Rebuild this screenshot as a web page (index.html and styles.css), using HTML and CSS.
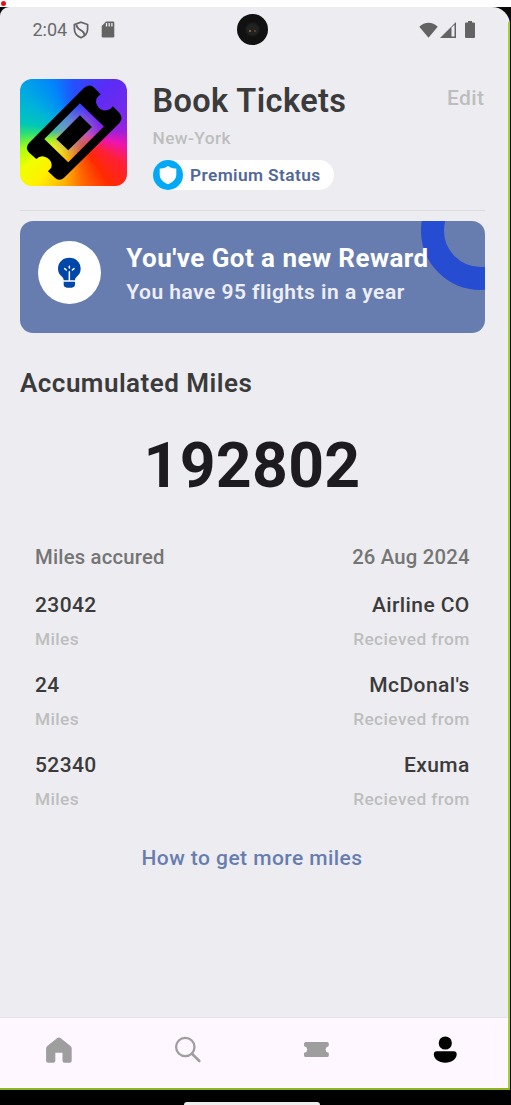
FILE: index.html
```html
<!DOCTYPE html>
<html lang="en">
<head>
<meta charset="utf-8">
<title>Book Tickets</title>
<link rel="stylesheet" href="styles.css">
</head>
<body>
<div class="device">
  <span class="rec-dot"></span>
  <div class="screen">
    <div class="status-bar">
      <span class="time">2:04</span>
      <svg class="shield-ic" viewBox="0 0 16 18"><path d="M8 1.200 14.600 3.500V8c0 4-2.500 7-6.600 8.800C3.900 15 1.400 12 1.400 8V3.500z" fill="none" stroke="#636363" stroke-width="1.700"/><path d="M3.500 3.500C3.500 10 11.500 8 11.500 14.500" fill="none" stroke="#636363" stroke-width="1.900"/></svg>
      <svg class="sd-ic" viewBox="0 0 14 17"><path d="M5 .5h7a1.300 1.300 0 0 1 1.300 1.300v13.400a1.300 1.300 0 0 1-1.300 1.300H2A1.300 1.300 0 0 1 .7 15.200V5z" fill="#636363"/><path d="M5.500 2v3.500M8.200 2v3.500M10.900 2v3.500" stroke="#ededf1" stroke-width="1.300"/></svg>
      <span class="camera"></span>
      <div class="signals">
        <svg class="wifi-ic" viewBox="0 0 19 16"><path d="M.3 4.800C5.500-.6 13.500-.6 18.700 4.800L9.500 15.700z" fill="#636363"/></svg>
        <svg class="cell-ic" viewBox="0 0 16 16"><path d="M0 16 16 0v16z" fill="#636363"/><path d="M11.500 5.500 14.500 2.800V14.500h-3z" fill="#ededf1"/></svg>
        <svg class="battery-ic" viewBox="0 0 10 17"><path d="M3 0h4v1.500h2a1 1 0 0 1 1 1V16a1 1 0 0 1-1 1H1a1 1 0 0 1-1-1V2.500a1 1 0 0 1 1-1h2z" fill="#636363"/></svg>
      </div>
    </div>

    <main class="content">
      <header class="profile">
        <div class="avatar">
          <svg viewBox="28 26 323 323"><path fill-rule="evenodd" d="M220 53Q236 38 251 52L270 72 258 84A27.500 27.500 0 0 0 307 108L327 128Q339 143 327 158L162 321Q147 336 132 322L112 303 122 293A27.500 27.500 0 0 0 77 266L55 247Q42 232 55 218ZM208 99 101 206 173 276 280 169Z"/><path d="M208 135 244 170 173 240 137 206Z"/></svg>
        </div>
        <div class="identity">
          <h1>Book Tickets</h1>
          <p class="city">New-York</p>
          <div class="badge">
            <svg viewBox="0 0 30 30"><circle cx="15" cy="15" r="15" fill="#03a9f4"/><path d="M15 6c2.600 1.900 5.200 2.600 8.300 2.600v5.800c0 4.600-3.400 7.600-8.300 9.900-4.900-2.300-8.300-5.300-8.300-9.900V8.600C9.800 8.600 12.400 7.900 15 6z" fill="#fff"/></svg>
            <span>Premium Status</span>
          </div>
        </div>
        <span class="edit">Edit</span>
      </header>

      <section class="reward">
        <span class="ring"></span>
        <svg class="bulb" viewBox="85 109 189 189"><circle cx="179.500" cy="203.500" r="94.500" fill="#fff"/><path d="M179 159c20 0 34 14 34 33 0 12-6 19-12 24-4 4-5 7-5 11h-34c0-4-1-7-5-11-6-5-12-12-12-24 0-19 14-33 34-33zM162 231h34v8q0 10-10 10h-14q-10 0-10-10z" fill="#0047a8"/><path d="M179 201v26M179 185v5M165 192l5 4M193 192l-5 4" stroke="#fff" stroke-width="4.500" stroke-linecap="round"/></svg>
        <div class="reward-text">
          <h2>You've Got a new Reward</h2>
          <p>You have 95 flights in a year</p>
        </div>
      </section>

      <h2 class="heading">Accumulated Miles</h2>
      <div class="total"><span>192802</span></div>

      <section class="ledger">
        <div class="row head"><span>Miles accured</span><span>26 Aug 2024</span></div>
        <div class="row main"><span>23042</span><span>Airline CO</span></div>
        <div class="row sub"><span>Miles</span><span>Recieved from</span></div>
        <div class="row main"><span>24</span><span>McDonal's</span></div>
        <div class="row sub"><span>Miles</span><span>Recieved from</span></div>
        <div class="row main"><span>52340</span><span>Exuma</span></div>
        <div class="row sub"><span>Miles</span><span>Recieved from</span></div>
      </section>
      <div class="more"><span>How to get more miles</span></div>
    </main>

    <nav class="tabs">
      <svg viewBox="0 0 30 30"><path d="M13.300 3.100a2.400 2.400 0 0 1 3.200 0l9.700 7.600q1.500 1.200 1.500 3v12.100a2 2 0 0 1-2 2h-5.200a2 2 0 0 1-2-2v-8h-7.200v8a2 2 0 0 1-2 2H4.100a2 2 0 0 1-2-2V13.700q0-1.800 1.500-3z" fill="#9e9e9e"/></svg>
      <svg viewBox="0 0 30 30"><circle cx="12.300" cy="12" r="9.200" fill="none" stroke="#9e9e9e" stroke-width="2.300"/><path d="m19 18.800 7.300 7.200" stroke="#9e9e9e" stroke-width="2.600" stroke-linecap="round"/></svg>
      <svg viewBox="0 0 30 30"><path d="M4.700 7h21.400q1.700 0 1.700 1.700v1.900q0 .8-.8.800a3.200 3.200 0 0 0 0 6.200q.8 0 .8.800v2q0 1.700-1.700 1.700H4.700q-1.700 0-1.700-1.700v-2q0-.8.800-.8a3.200 3.200 0 0 0 0-6.200q-.8 0-.8-.8V8.700Q3 7 4.700 7z" fill="#9e9e9e"/></svg>
      <svg viewBox="0 0 30 30"><circle cx="15.300" cy="8" r="6.600"/><path d="M6.800 16.300h16.900a3 3 0 0 1 3 3c0 4.700-5 8.400-11.400 8.400S3.800 24 3.800 19.300a3 3 0 0 1 3-3z"/></svg>
    </nav>
  </div>
  <div class="gesture"><span></span></div>
</div>
</body>
</html>
```
FILE: styles.css
```css
* { box-sizing: border-box; }
body { margin: 0; background: #fff; font-family: Roboto, sans-serif; }
h1, h2, p { margin: 0; }
svg { display: block; flex: none; }
span { white-space: nowrap; }

.device {
  position: relative;
  width: 511px;
  height: 1105px;
  padding-top: 7px;
  background: linear-gradient(#fff 7px, #0a0a0a 7px);
  overflow: hidden;
}
.rec-dot {
  position: absolute;
  left: 1px;
  top: 1px;
  width: 5px;
  height: 5px;
  border-radius: 50%;
  background: #e80f1c;
}
.screen {
  display: flex;
  flex-direction: column;
  width: 510px;
  height: 1083px;
  padding-right: 2px;
  border-bottom: 2px solid #8db51f;
  border-radius: 9px 18px 0 0;
  background: linear-gradient(#a6cf32, #a6cf32) right 15px / 2px 100% no-repeat #ededf1;
  overflow: hidden;
}

.status-bar {
  position: relative;
  display: flex;
  align-items: center;
  height: 45px;
  padding: 0 33px 0 32.5px;
  color: #6a6a6c;
  font-size: 18px;
}
.time { width: 40px; }
.shield-ic { width: 16px; height: 18px; }
.sd-ic { width: 14px; height: 17px; margin-left: 12.5px; }
.camera {
  position: absolute;
  left: 237px;
  top: 7px;
  width: 31px;
  height: 31px;
  border-radius: 50%;
  background:
    radial-gradient(circle at 13px 17px, #80704a 0 .5px, transparent 1.5px),
    radial-gradient(circle at 18px 17px, #7a3b25 0 .5px, transparent 1.5px),
    radial-gradient(circle, #222 0 5px, #111 8px);
}
.signals { display: flex; align-items: center; margin-left: auto; }
.wifi-ic { width: 19px; height: 16px; }
.cell-ic { width: 16px; height: 16px; margin-left: 2px; }
.battery-ic { width: 10px; height: 17px; margin-left: 9px; }

.content { flex: 1; padding: 26.5px 23.5px 0 19.5px; }
.profile {
  display: flex;
  height: 132px;
  border-bottom: 1px solid #dcdce0;
}
.avatar {
  width: 107.5px;
  height: 107.5px;
  border-radius: 12px;
  overflow: hidden;
  background:
    radial-gradient(circle at 50% 50%, rgba(165, 140, 180, .8), rgba(165, 140, 180, .55) 18%, transparent 36%),
    conic-gradient(#2450ff, #5a2cf6 35deg, #7829ea 70deg, #9c20dd 88deg, #ee14b0 103deg, #ff2038 122deg, #ff2a00 145deg, #ff6a00 170deg, #ffb000 190deg, #fff000 215deg, #f0ff00 235deg, #a8ff10 252deg, #30e070 268deg, #00c8b8 280deg, #00b0dc 305deg, #0088fa 335deg, #2450ff);
}
.identity { margin-left: 25.5px; }
h1 {
  height: 44px;
  line-height: 45px;
  font-size: 32.5px;
  font-weight: 600;
  color: #3b3b3b;
  letter-spacing: .4px;
}
.city {
  height: 37px;
  line-height: 31px;
  font-size: 17.3px;
  font-weight: 500;
  color: #bdbdbd;
  letter-spacing: .4px;
}
.badge {
  display: flex;
  align-items: center;
  width: 181px;
  height: 30px;
  border-radius: 15px;
  background: #fff;
  color: #526799;
  font-size: 17.3px;
  font-weight: 600;
  letter-spacing: .4px;
}
.badge svg { width: 30px; height: 30px; margin-right: 7.5px; }
.edit {
  margin-left: auto;
  line-height: 39px;
  font-size: 21px;
  font-weight: 500;
  color: #bdbdbd;
  letter-spacing: .4px;
}

.reward {
  position: relative;
  display: flex;
  height: 112px;
  margin-top: 10px;
  padding: 20.5px 0 0 18.5px;
  border-radius: 13px;
  background: #687daf;
  overflow: hidden;
}
.ring {
  position: absolute;
  right: -55px;
  top: -49.5px;
  width: 119px;
  height: 119px;
  border: 23px solid #264cd2;
  border-radius: 50%;
}
.bulb { width: 63px; height: 63px; }
.reward-text { position: relative; margin-left: 25.3px; }
.reward-text h2 {
  height: 34px;
  line-height: 34px;
  font-size: 26px;
  font-weight: 700;
  color: #fff;
  white-space: nowrap;
  letter-spacing: .45px;
}
.reward-text p {
  line-height: 35px;
  font-size: 21px;
  font-weight: 600;
  color: #eeeef6;
  letter-spacing: .48px;
}

.heading {
  margin-top: 34px;
  padding-left: .5px;
  line-height: 32px;
  font-size: 26px;
  font-weight: 600;
  color: #3b3b3b;
  letter-spacing: .47px;
}
.total {
  display: flex;
  justify-content: center;
  margin-top: 30px;
  line-height: 74px;
  font-size: 62.5px;
  font-weight: 700;
  color: #1d1b20;
  letter-spacing: .3px;
}
.ledger { padding: 38px 14.8px 0 15.5px; font-weight: 500; }
.row { display: flex; justify-content: space-between; letter-spacing: .4px; }
.head { height: 47px; line-height: 32px; font-size: 20.3px; color: #757575; letter-spacing: .2px; }
.main { height: 34px; line-height: 34px; font-size: 21px; color: #3b3b3b; }
.sub { height: 46px; line-height: 34px; font-size: 17.3px; color: #bdbdbd; }
.more {
  display: flex;
  justify-content: center;
  margin-top: 13px;
  line-height: 34px;
  font-size: 21px;
  font-weight: 500;
  color: #687daf;
  letter-spacing: .44px;
}

.tabs {
  display: flex;
  justify-content: space-between;
  height: 71px;
  padding: 17px 48px 0 44px;
  border-top: 1px solid #e6e2e9;
  background: #fef7ff;
}
.tabs svg { width: 30px; height: 30px; }

.gesture {
  display: flex;
  justify-content: center;
  height: 15px;
  padding: 12px 7px 0 0;
  background: #000;
}
.gesture span {
  width: 136px;
  height: 6px;
  border-radius: 3px;
  background: #eee;
}
```
